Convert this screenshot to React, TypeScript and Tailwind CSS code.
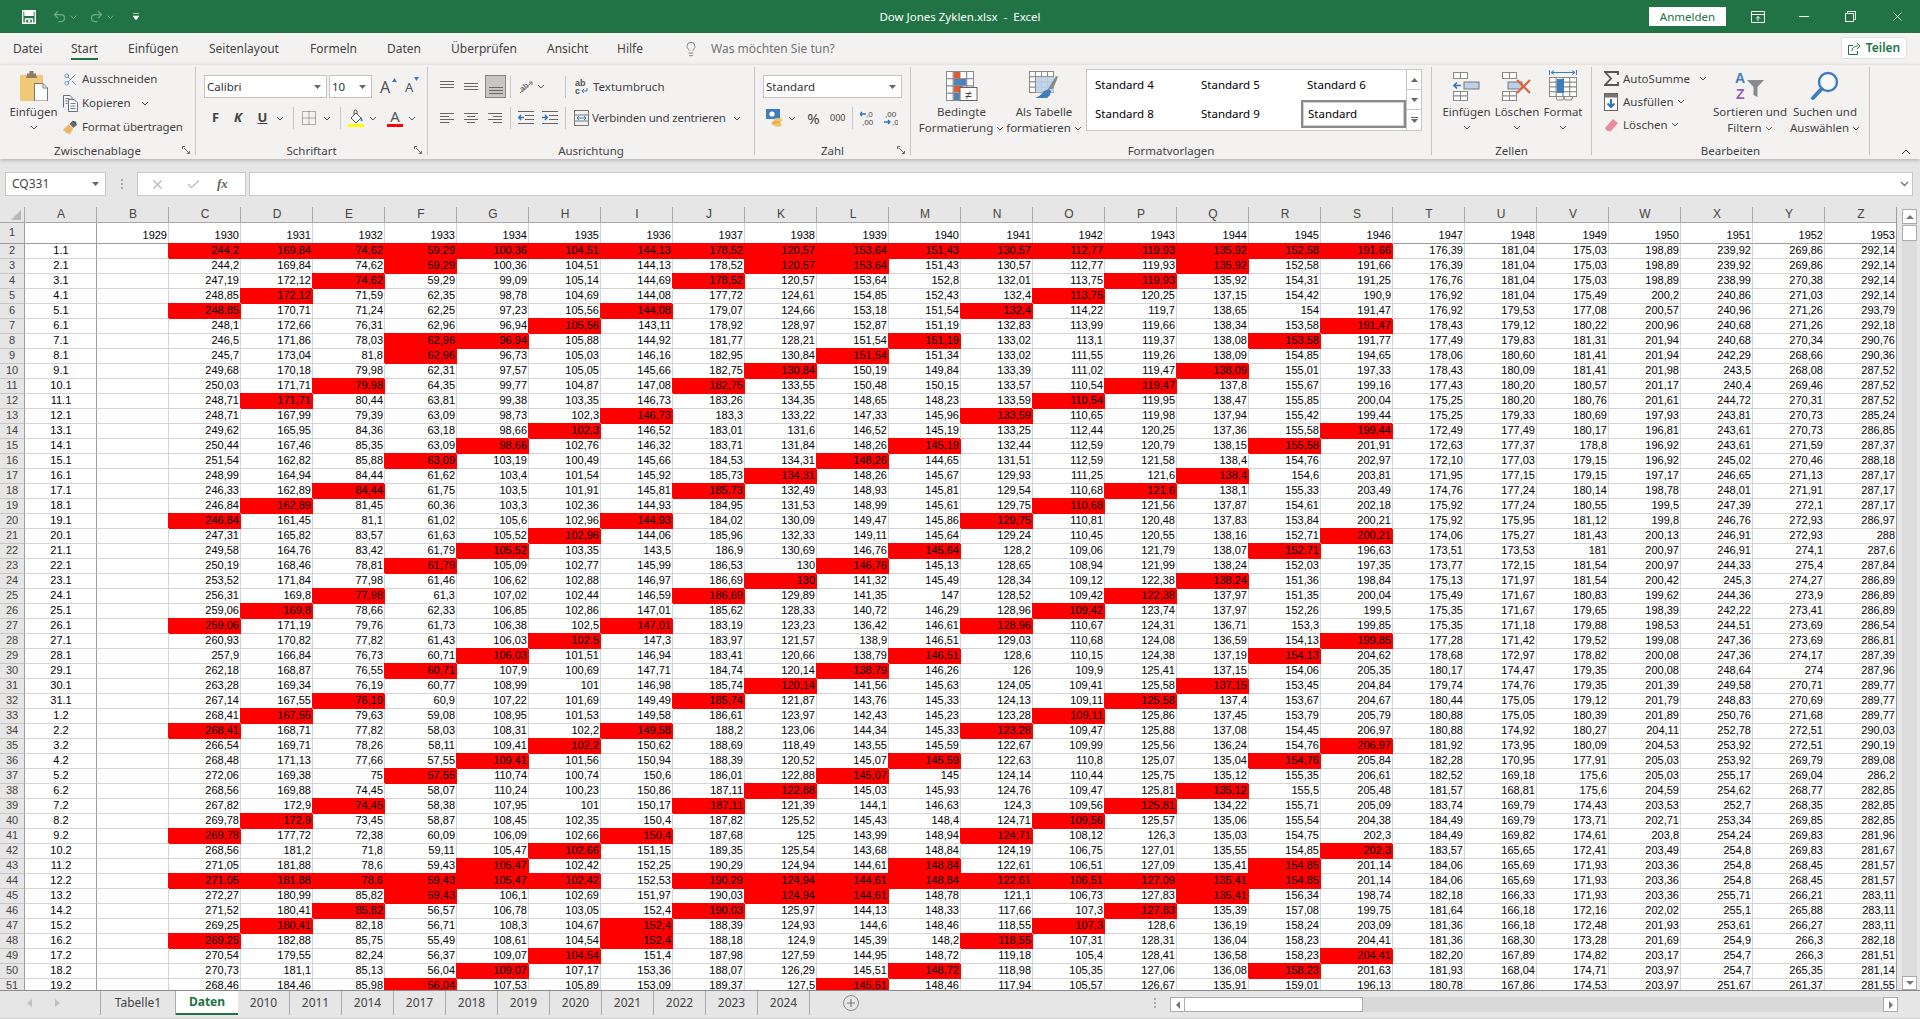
import type { ReactNode } from "react";
import { Check, Lightbulb, Plus, Redo2, Scissors, Undo2, X } from "lucide-react";

const COLUMNS = [
  "244,2* 244,2 247,19 248,85 248,85* 248,1 246,5 245,7 249,68 250,03 248,71 248,71 249,62 250,44 251,54 248,99 246,33 246,84 246,84* 247,31 249,58 250,19 253,52 256,31 259,06 259,06* 260,93 257,9 262,18 263,28 267,14 268,41 268,41* 266,54 268,48 272,06 268,56 267,82 269,78 269,78* 268,56 271,05 271,05* 272,27 271,52 269,25 269,25* 270,54 270,73 268,46",
  "169,84* 169,84 172,12 172,12* 170,71 172,66 171,86 173,04 170,18 171,71 171,71* 167,99 165,95 167,46 162,82 164,94 162,89 162,89* 161,45 165,82 164,76 168,46 171,84 169,8 169,8* 171,19 170,82 166,84 168,87 169,34 167,55 167,55* 168,71 169,71 171,13 169,38 169,88 172,9 172,9* 177,72 181,2 181,88 181,88* 180,99 180,41 180,41* 182,88 179,55 181,1 184,46",
  "74,62* 74,62 74,62* 71,59 71,24 76,31 78,03 81,8 79,98 79,98* 80,44 79,39 84,36 85,35 85,88 84,44 84,44* 81,45 81,1 83,57 83,42 78,81 77,98 77,98* 78,66 79,76 77,82 76,73 76,55 76,19 76,19* 79,63 77,82 78,26 77,66 75 74,45 74,45* 73,45 72,38 71,8 78,6 78,6* 85,82 85,82* 82,18 85,75 82,24 85,13 85,98",
  "59,29* 59,29* 59,29 62,35 62,25 62,96 62,96* 62,96* 62,31 64,35 63,81 63,09 63,18 63,09 63,09* 61,62 61,75 60,36 61,02 61,63 61,79 61,79* 61,46 61,3 62,33 61,73 61,43 60,71 60,71* 60,77 60,9 59,08 58,03 58,11 57,55 57,55* 58,07 58,38 58,87 60,09 59,11 59,43 59,43* 59,43* 56,57 56,71 55,49 56,37 56,04 56,04*",
  "100,36* 100,36 99,09 98,78 97,23 96,94 96,94* 96,73 97,57 99,77 99,38 98,73 98,66 98,66* 103,19 103,4 103,5 103,3 105,6 105,52 105,52* 105,09 106,62 107,02 106,85 106,38 106,03 106,03* 107,9 108,99 107,22 108,95 108,31 109,41 109,41* 110,74 110,24 107,95 108,45 106,09 105,47 105,47* 105,47* 106,1 106,78 108,3 108,61 109,07 109,07* 107,53",
  "104,51* 104,51 105,14 104,69 105,56 105,56* 105,88 105,03 105,05 104,87 103,35 102,3 102,3* 102,76 100,49 101,54 101,91 102,36 102,96 102,96* 103,35 102,77 102,88 102,44 102,86 102,5 102,5* 101,51 100,69 101 101,69 101,53 102,2 102,2* 101,56 100,74 100,23 101 102,35 102,66 102,66* 102,42 102,42* 102,69 103,05 104,67 104,54 104,54* 107,17 105,89",
  "144,13* 144,13 144,69 144,08 144,08* 143,11 144,92 146,16 145,66 147,08 146,73 146,73* 146,52 146,32 145,66 145,92 145,81 144,93 144,93* 144,06 143,5 145,99 146,97 146,59 147,01 147,01* 147,3 146,94 147,71 146,98 149,49 149,58 149,58* 150,62 150,94 150,6 150,86 150,17 150,4 150,4* 151,15 152,25 152,53 151,97 152,4 152,4* 152,4* 151,4 153,36 153,09",
  "178,52* 178,52 178,52* 177,72 179,07 178,92 181,77 182,95 182,75 182,75* 183,26 183,3 183,01 183,71 184,53 185,73 185,73* 184,95 184,02 185,96 186,9 186,53 186,69 186,69* 185,62 183,19 183,97 183,41 184,74 185,74 185,74* 186,61 188,2 188,69 188,39 186,01 187,11 187,11* 187,82 187,68 189,35 190,29 190,29* 190,03 190,03* 188,39 188,18 187,98 188,07 189,37",
  "120,57* 120,57* 120,57 124,61 124,66 128,97 128,21 130,84 130,84* 133,55 134,35 133,22 131,6 131,84 134,31 134,31* 132,49 131,53 130,09 132,33 130,69 130 130* 129,89 128,33 123,23 121,57 120,66 120,14 120,14* 121,87 123,97 123,06 118,49 120,52 122,88 122,88* 121,39 125,52 125 125,54 124,94 124,94* 124,94* 125,97 124,93 124,9 127,59 126,29 127,5",
  "153,64* 153,64* 153,64 154,85 153,18 152,87 151,54 151,54* 150,19 150,48 148,65 147,33 146,52 148,26 148,26* 148,26 148,93 148,99 149,47 149,11 146,76 146,76* 141,32 141,35 140,72 136,42 138,9 138,79 138,79* 141,56 143,76 142,43 144,34 143,55 145,07 145,07* 145,03 144,1 145,43 143,99 143,68 144,61 144,61* 144,61* 144,13 144,6 145,39 144,95 145,51 145,51*",
  "151,43* 151,43 152,8 152,43 151,54 151,19 151,19* 151,34 149,84 150,15 148,23 145,96 145,19 145,19* 144,65 145,67 145,81 145,61 145,86 145,64 145,64* 145,13 145,49 147 146,29 146,61 146,51 146,51* 146,26 145,63 145,33 145,23 145,33 145,59 145,59* 145 145,93 146,63 148,4 148,94 148,84 148,84* 148,84* 148,78 148,33 148,46 148,2 148,72 148,72* 148,46",
  "130,57* 130,57 132,01 132,4 132,4* 132,83 133,02 133,02 133,39 133,57 133,59 133,59* 133,25 132,44 131,51 129,93 129,54 129,75 129,75* 129,24 128,2 128,65 128,34 128,52 128,96 128,96* 129,03 128,6 126 124,05 124,13 123,28 123,28* 122,67 122,63 124,14 124,76 124,3 124,71 124,71* 124,19 122,61 122,61* 121,1 117,66 118,55 118,55* 119,18 118,98 117,94",
  "112,77* 112,77 113,75 113,75* 114,22 113,99 113,1 111,55 111,02 110,54 110,54* 110,65 112,44 112,59 112,59 111,25 110,68 110,68* 110,81 110,45 109,06 108,94 109,12 109,42 109,42* 110,67 110,68 110,15 109,9 109,41 109,11 109,11* 109,47 109,99 110,8 110,44 109,47 109,56 109,56* 108,12 106,75 106,51 106,51* 106,73 107,3 107,3* 107,31 105,4 105,35 105,57",
  "119,93* 119,93 119,93* 120,25 119,7 119,66 119,37 119,26 119,47 119,47* 119,95 119,98 120,25 120,79 121,58 121,6 121,6* 121,56 120,48 120,55 121,79 121,99 122,38 122,38* 123,74 124,31 124,08 124,38 125,41 125,58 125,58* 125,86 125,88 125,56 125,07 125,75 125,81 125,81* 125,57 126,3 127,01 127,09 127,09* 127,83 127,83* 128,6 128,31 128,41 127,06 126,67",
  "135,92* 135,92* 135,92 137,15 138,65 138,34 138,08 138,09 138,09* 137,8 138,47 137,94 137,36 138,15 138,4 138,4* 138,1 137,87 137,83 138,16 138,07 138,24 138,24* 137,97 137,97 136,71 136,59 137,19 137,15 137,15* 137,4 137,45 137,08 136,24 135,04 135,12 135,12* 134,22 135,06 135,03 135,55 135,41 135,41* 135,41* 135,39 136,19 136,04 136,58 136,08 135,91",
  "152,58* 152,58 154,31 154,42 154 153,58 153,58* 154,85 155,01 155,67 155,85 155,42 155,58 155,58* 154,76 154,6 155,33 154,61 153,84 152,71 152,71* 152,03 151,36 151,35 152,26 153,3 154,13 154,13* 154,06 153,45 153,67 153,79 154,45 154,76 154,76* 155,35 155,5 155,71 155,54 154,75 154,85 154,85* 154,85* 156,34 157,08 158,24 158,23 158,23 158,23* 159,01",
  "191,66* 191,66 191,25 190,9 191,47 191,47* 191,77 194,65 197,33 199,16 200,04 199,44 199,44* 201,91 202,97 203,81 203,49 202,18 200,21 200,21* 196,63 197,35 198,84 200,04 199,5 199,85 199,85* 204,62 205,35 204,84 204,67 205,79 206,97 206,97* 205,84 206,61 205,48 205,09 204,38 202,3 202,3* 201,14 201,14 198,74 199,75 203,09 204,41 204,41* 201,63 196,13",
  "176,39 176,39 176,76 176,92 176,92 178,43 177,49 178,06 178,43 177,43 175,25 175,25 172,49 172,63 172,10 171,95 174,76 175,92 175,92 174,06 173,51 173,77 175,13 175,49 175,35 175,35 177,28 178,68 180,17 179,74 180,44 180,88 180,88 181,92 182,28 182,52 181,57 183,74 184,49 184,49 183,57 184,06 184,06 182,18 181,64 181,36 181,36 182,20 181,93 180,78",
  "181,04 181,04 181,04 181,04 179,53 179,12 179,83 180,60 180,09 180,20 180,20 179,33 177,49 177,37 177,03 177,15 177,24 177,24 175,95 175,27 173,53 172,15 171,97 171,67 171,67 171,18 171,42 172,97 174,47 174,76 175,05 175,05 174,92 173,95 170,95 169,18 168,81 169,79 169,79 169,82 165,65 165,69 165,69 166,33 166,18 166,18 168,30 167,89 168,04 167,86",
  "175,03 175,03 175,03 175,49 177,08 180,22 181,31 181,41 181,41 180,57 180,76 180,69 180,17 178,8 179,15 179,15 180,14 180,55 181,12 181,43 181 181,54 181,54 180,83 179,65 179,88 179,52 178,82 179,35 179,35 179,12 180,39 180,27 180,09 177,91 175,6 175,6 174,43 173,71 174,61 172,41 171,93 171,93 171,93 172,16 172,48 173,28 174,82 174,71 174,53",
  "198,89 198,89 198,89 200,2 200,57 200,96 201,94 201,94 201,98 201,17 201,61 197,93 196,81 196,92 196,92 197,17 198,78 199,5 199,8 200,13 200,97 200,97 200,42 199,62 198,39 198,53 199,08 200,08 200,08 201,39 201,79 201,89 204,11 204,53 205,03 205,03 204,59 203,53 202,71 203,8 203,49 203,36 203,36 203,36 202,02 201,93 201,69 203,17 203,97 203,97",
  "239,92 239,92 238,99 240,86 240,96 240,68 240,68 242,29 243,5 240,4 244,72 243,81 243,61 243,61 245,02 246,65 248,01 247,39 246,76 246,91 246,91 244,33 245,3 244,36 242,22 244,51 247,36 247,36 248,64 249,58 248,83 250,76 252,78 253,92 253,92 255,17 254,62 252,7 253,34 254,24 254,8 254,8 254,8 255,71 255,1 253,61 254,9 254,7 254,7 251,67",
  "269,86 269,86 270,38 271,03 271,26 271,26 270,34 268,66 268,08 269,46 270,31 270,73 270,73 271,59 270,46 271,13 271,91 272,1 272,93 272,93 274,1 275,4 274,27 273,9 273,41 273,69 273,69 274,17 274 270,71 270,69 271,68 272,51 272,51 269,79 269,04 268,77 268,35 269,85 269,83 269,83 268,45 268,45 266,21 265,88 266,27 266,3 266,3 265,35 261,37",
  "292,14 292,14 292,14 292,14 293,79 292,18 290,76 290,36 287,52 287,52 287,52 285,24 286,85 287,37 288,18 287,17 287,17 287,17 286,97 288 287,6 287,84 286,89 286,89 286,89 286,54 286,81 287,39 287,96 289,77 289,77 289,77 290,03 290,19 289,08 286,2 282,85 282,85 282,85 281,96 281,67 281,57 281,57 283,11 283,11 283,11 282,18 281,51 281,14 281,55",
].map((c) => c.split(" "));

const LETTERS = "ABCDEFGHIJKLMNOPQRSTUVWXYZ".split("");
const SHEETS = ["2010", "2011", "2014", "2017", "2018", "2019", "2020", "2021", "2022", "2023", "2024"];
const MENU = [
  { label: "Datei", w: "w-[58px]" },
  { label: "Start", w: "w-[57px]" },
  { label: "Einfügen", w: "w-[81px]" },
  { label: "Seitenlayout", w: "w-[101px]" },
  { label: "Formeln", w: "w-[77px]" },
  { label: "Daten", w: "w-[64px]" },
  { label: "Überprüfen", w: "w-[96px]" },
  { label: "Ansicht", w: "w-[70px]" },
  { label: "Hilfe", w: "w-[66px]" },
];

function dayLabel(i: number) {
  return i < 31 ? `${i + 1}.1` : `${i - 30}.2`;
}

function Chev({ className = "" }: { className?: string }) {
  return (
    <svg width="8" height="5" viewBox="0 0 8 5" className={`shrink-0 ${className}`}>
      <path d="M1 1l3 3 3-3" fill="none" stroke="#555" strokeWidth="1" />
    </svg>
  );
}

function Caret() {
  return (
    <svg width="7" height="4" viewBox="0 0 7 4" className="shrink-0">
      <path d="M0 0h7L3.5 4z" fill="#666" />
    </svg>
  );
}

function Sep({ className = "" }: { className?: string }) {
  return <div className={`w-px h-[22px] shrink-0 bg-[#c8c6c4] ${className}`} />;
}

function Launcher() {
  return (
    <svg width="8" height="8" viewBox="0 0 8 8" className="absolute right-[5px] bottom-px">
      <path d="M.5 3V.5H3M7.5 5v2.5H5M2 2l5 5" fill="none" stroke="#666" strokeWidth="1" />
    </svg>
  );
}

function Group({ w, label, launcher, children }: { w: string; label: string; launcher?: boolean; children: ReactNode }) {
  return (
    <div className={`relative shrink-0 h-[88px] border-r border-[#c8c6c4] ${w}`}>
      <div className="flex flex-col h-[77px]">{children}</div>
      <div className="h-[14px] leading-[14px] text-center text-[11.5px] text-[#444] whitespace-nowrap">{label}</div>
      {launcher && <Launcher />}
    </div>
  );
}

function BigButton({ className, icon, lines, chevOnly }: { className: string; icon: ReactNode; lines: ReactNode[]; chevOnly?: boolean }) {
  return (
    <div className={`flex flex-col items-center pt-[4px] shrink-0 text-[11.5px] text-[#444] ${className}`}>
      <div className="h-[29px] flex items-center justify-center">{icon}</div>
      <div className="mt-[4px]">
        {lines.map((l, i) => (
          <div key={i} className="h-[16px] leading-[16px] whitespace-nowrap flex items-center justify-center gap-[3px]">
            {l}
          </div>
        ))}
        {chevOnly && (
          <div className="h-[14px] flex items-center justify-center">
            <Chev />
          </div>
        )}
      </div>
    </div>
  );
}

function Lines({ rows }: { rows: [number, number, number][] }) {
  return (
    <svg width="14" height="14" viewBox="0 0 14 14" className="shrink-0">
      {rows.map(([a, b, y], i) => (
        <path key={i} d={`M${a} ${y + 0.5}H${b}`} stroke="#666" strokeWidth="1" />
      ))}
    </svg>
  );
}

const COMBO = "flex items-center justify-between h-[23px] bg-white border border-[#c4c4c4] px-[2px] pr-[5px] text-[11.5px] text-[#333] shrink-0";

function PasteIcon() {
  return (
    <svg width="28" height="30" viewBox="0 0 28 30">
      <rect x="0" y="4" width="23" height="26" rx="1" fill="#f0c878" />
      <path d="M7 4V2.5h2.5V0h4v2.5H16V4l1 3H6z" fill="#8e7c6a" />
      <path d="M14.5 12.5H23l4.5 4.5v13h-13z" fill="#fff" stroke="#777" />
      <path d="M23 12.5V17h4.5" fill="none" stroke="#777" />
    </svg>
  );
}

function CopyIcon() {
  return (
    <svg width="15" height="17" viewBox="0 0 15 17" fill="none" stroke="#5a6f8c">
      <path d="M.5 12.5V.5H7l2 2V4" />
      <path d="M5.5 4.5H11l3.5 3v9h-9z" fill="#fff" />
      <path d="M2.5 3.5h4M2.5 6h2M2.5 8.5h2M7.5 8.5h5M7.5 11h5M7.5 13.5h5" stroke="#777" />
    </svg>
  );
}

function PainterIcon() {
  return (
    <svg width="16" height="17" viewBox="0 0 16 17">
      <path d="M1 10l5-5 5 5-4 6-2-1-1-1-2 1 1-2-3-1z" fill="#eeb46a" />
      <path d="M7 4.5l3-3 4 .5.5 4-3.5 3z" fill="#6b6b6b" />
      <path d="M10.5 1.5l4 4" stroke="#444" />
    </svg>
  );
}

function SaveIcon() {
  return (
    <svg width="14" height="14" viewBox="0 0 14 14" fill="none" stroke="#fff" strokeWidth="1.4">
      <path d="M.7.7h12.6v12.6H.7z" />
      <path d="M3 .7v4.6h8V.7" fill="#fff" />
      <path d="M3.5 13.3V9h7v4.3" />
      <rect x="6.2" y="10" width="2" height="2.4" fill="#fff" stroke="none" />
    </svg>
  );
}

function TableIcon({ w = 15, h = 15, cols = 3, rows = 3 }: { w?: number; h?: number; cols?: number; rows?: number }) {
  const cells: ReactNode[] = [];
  for (let r = 0; r < rows; r++)
    for (let c = 0; c < cols; c++)
      cells.push(<rect key={`${r}-${c}`} x={0.5 + (c * (w - 1)) / cols} y={0.5 + (r * (h - 1)) / rows} width={(w - 1) / cols} height={(h - 1) / rows} fill="#fff" stroke="#8a8a8a" />);
  return <g>{cells}</g>;
}

function CondFormatIcon() {
  return (
    <svg width="32" height="30" viewBox="0 0 32 30">
      <TableIcon w={28} h={30} cols={4} rows={4} />
      <rect x="8" y="1" width="6" height="6.5" fill="#d95f33" />
      <rect x="8" y="8" width="12" height="6.5" fill="#4f81bd" />
      <rect x="8" y="15" width="9" height="6.5" fill="#d95f33" />
      <rect x="8" y="22" width="5" height="7" fill="#4f81bd" />
      <rect x="14" y="16.5" width="17" height="13" fill="#fff" stroke="#666" />
      <text x="22.5" y="27.5" fontSize="12" textAnchor="middle" fill="#444" fontFamily="Liberation Sans, sans-serif">≠</text>
    </svg>
  );
}

function TableFormatIcon() {
  return (
    <svg width="30" height="30" viewBox="0 0 30 30">
      <TableIcon w={25} h={22} cols={4} rows={4} />
      <rect x="7" y="6" width="18" height="15.5" fill="#bdd0e6" opacity="0.9" />
      <path d="M19 18l8-13 2 1-5 12z" fill="#8a8a8a" />
      <path d="M15 20l5-2 2 2-1 4-3 3H6c3-1 6-3 9-7z" fill="#3f7dbf" />
    </svg>
  );
}

function InsertCellsIcon() {
  return (
    <svg width="27" height="30" viewBox="0 0 27 30">
      <g transform="translate(0 1)"><TableIcon w={15} h={7} cols={2} rows={1} /></g>
      <rect x="11" y="11" width="15" height="7" fill="#bdd0e6" stroke="#777" />
      <path d="M1 14.5h7M4 11.5l-3 3 3 3" fill="none" stroke="#2f75b5" strokeWidth="1.6" />
      <g transform="translate(0 20)"><TableIcon w={15} h={10} cols={2} rows={2} /></g>
    </svg>
  );
}

function DeleteCellsIcon() {
  return (
    <svg width="30" height="30" viewBox="0 0 30 30">
      <g transform="translate(0 1)"><TableIcon w={15} h={7} cols={2} rows={1} /></g>
      <rect x="6" y="11" width="14" height="7" fill="#bdd0e6" stroke="#777" />
      <g transform="translate(0 20)"><TableIcon w={15} h={10} cols={2} rows={2} /></g>
      <path d="M15 9l13 13M28 9L15 22" stroke="#e0603a" strokeWidth="2.2" />
    </svg>
  );
}

function FormatCellsIcon() {
  return (
    <svg width="28" height="32" viewBox="0 0 28 32">
      <path d="M.5 0v5M27.5 0v5M2 2.5h24M5 .5l-3 2 3 2M23 .5l3 2-3 2" fill="none" stroke="#3f7dbf" />
      <g transform="translate(0 7)"><TableIcon w={28} h={20} cols={4} rows={4} /></g>
      <rect x="8" y="9" width="7" height="14" fill="#3f7dbf" />
      <path d="M7 27l1 3h6l1-3M15 27l1 3h6l2-3" fill="none" stroke="#8a8a8a" />
    </svg>
  );
}

function SortIcon() {
  return (
    <svg width="30" height="30" viewBox="0 0 30 30">
      <text x="0" y="12" fontSize="14" fontWeight="700" fill="#3f7dbf" fontFamily="Liberation Sans, sans-serif">A</text>
      <text x="1" y="28" fontSize="14" fontWeight="700" fill="#8f5fbf" fontFamily="Liberation Sans, sans-serif">Z</text>
      <path d="M12 9h17l-6.5 7v10l-4-2v-8z" fill="#8a8a8a" />
    </svg>
  );
}

function SearchIcon() {
  return (
    <svg width="28" height="30" viewBox="0 0 28 30" fill="none">
      <circle cx="17" cy="11" r="9" stroke="#3f7dbf" strokeWidth="2.4" fill="#fff" fillOpacity="0.5" />
      <path d="M10.5 18L2 27" stroke="#3f7dbf" strokeWidth="4" strokeLinecap="round" />
    </svg>
  );
}

function Ribbon() {
  return (
    <div className="relative z-10 flex items-start h-[94px] pt-[2px] bg-[#f3f2f1] shadow-[0_1px_4px_rgba(0,0,0,0.25)]">
      <Group w="w-[196px]" label="Zwischenablage" launcher>
        <div className="flex">
          <BigButton className="ml-[10px] w-[47px]" icon={<PasteIcon />} lines={["Einfügen"]} chevOnly />
          <div className="ml-[6px] text-[11.5px] text-[#444]">
            <div className="flex items-center h-[24px]">
              <div className="w-[15px] flex justify-center"><Scissors size={15} color="#4a7ebb" strokeWidth={1.2} /></div>
              <span className="ml-[4px]">Ausschneiden</span>
            </div>
            <div className="flex items-center h-[24px]">
              <div className="w-[15px] flex justify-center"><CopyIcon /></div>
              <span className="ml-[4px] w-[57px]">Kopieren</span>
              <Chev className="ml-[2px]" />
            </div>
            <div className="flex items-center h-[24px]">
              <div className="w-[15px] flex justify-center"><PainterIcon /></div>
              <span className="ml-[4px] whitespace-nowrap tracking-[-0.15px]">Format übertragen</span>
            </div>
          </div>
        </div>
      </Group>

      <Group w="w-[232px]" label="Schriftart" launcher>
        <div className="flex items-center mt-[8px] ml-[8px] h-[23px]">
          <div className={`${COMBO} w-[123px]`}>Calibri<Caret /></div>
          <div className={`${COMBO} w-[43px] ml-[2px]`}>10<Caret /></div>
          <div className="ml-[8px] w-[14px] flex items-start justify-start relative text-[16px] leading-[20px] text-[#555]">
            A
            <svg width="5" height="4" viewBox="0 0 5 4" className="absolute right-[-3px] top-[1px]"><path d="M0 4h5L2.5 0z" fill="#3f7dbf" /></svg>
          </div>
          <div className="ml-[11px] w-[12px] relative text-[13px] leading-[18px] text-[#555]">
            A
            <svg width="5" height="4" viewBox="0 0 5 4" className="absolute right-[-2px] top-[-1px]"><path d="M0 0h5L2.5 4z" fill="#3f7dbf" /></svg>
          </div>
        </div>
        <div className="flex items-center mt-[9px] h-[22px] text-[13px] text-[#444]">
          <div className="ml-[8px] w-[23px] text-center font-bold">F</div>
          <div className="w-[22px] text-center font-bold italic">K</div>
          <div className="ml-[2px] w-[23px] text-center font-bold underline">U</div>
          <Chev className="ml-[2px]" />
          <Sep className="ml-[9px]" />
          <svg width="14" height="14" viewBox="0 0 14 14" className="ml-[8px] shrink-0" fill="none" stroke="#666" strokeDasharray="1 1">
            <path d="M.5.5h13v13H.5zM7 .5v13M.5 7h13" />
          </svg>
          <Chev className="ml-[7px]" />
          <Sep className="ml-[9px]" />
          <svg width="16" height="18" viewBox="0 0 16 18" className="ml-[7px] shrink-0">
            <path d="M3 9l5-5 5 5-5 5z" fill="#fff" stroke="#555" />
            <path d="M6 6V2.5a1.5 1.5 0 0 1 3 0V5" fill="none" stroke="#555" />
            <path d="M13 8c1.5 2 1.8 3 1.5 4-.8.7-1.8.3-2-.7z" fill="#3f7dbf" />
            <rect x="0" y="15" width="16" height="3" fill="#ffff00" />
          </svg>
          <Chev className="ml-[5px]" />
          <div className="ml-[10px] w-[16px] h-[18px] flex flex-col items-center">
            <span className="h-[15px] leading-[15px] text-[15px] text-[#555]">A</span>
            <div className="w-[16px] h-[3px] bg-[#ff0000]" />
          </div>
          <Chev className="ml-[5px]" />
        </div>
      </Group>

      <Group w="w-[327px]" label="Ausrichtung" launcher={false}>
        <div className="flex items-center mt-[8px] h-[23px] text-[11.5px] text-[#444] whitespace-nowrap">
          <div className="ml-[12px]"><Lines rows={[[0, 14, 1], [0, 14, 4], [0, 14, 7]]} /></div>
          <div className="ml-[10px]"><Lines rows={[[0, 14, 3], [0, 14, 6], [0, 14, 9]]} /></div>
          <div className="ml-[7px] w-[21px] h-[23px] bg-[#c8c6c4] border border-[#8a8886] flex items-center justify-center"><Lines rows={[[0, 14, 7], [0, 14, 10], [0, 14, 13]]} /></div>
          <Sep className="ml-[4px]" />
          <svg width="15" height="15" viewBox="0 0 15 15" className="ml-[7px] shrink-0">
            <text x="1" y="10" fontSize="8" fill="#555" transform="rotate(-40 7 7)" fontFamily="Liberation Sans, sans-serif">ab</text>
            <path d="M2 14L14 3M11 3h3v3" fill="none" stroke="#777" />
          </svg>
          <Chev className="ml-[4px]" />
          <Sep className="ml-[20px]" />
          <svg width="13" height="17" viewBox="0 0 13 17" className="ml-[9px] shrink-0">
            <text x="0" y="8" fontSize="9" fontWeight="700" fill="#555" fontFamily="Liberation Sans, sans-serif">ab</text>
            <text x="0" y="16" fontSize="9" fontWeight="700" fill="#555" fontFamily="Liberation Sans, sans-serif">c</text>
            <path d="M12 10v3H7M9 11l-2 2 2 2" fill="none" stroke="#3f7dbf" />
          </svg>
          <span className="ml-[5px]">Textumbruch</span>
        </div>
        <div className="flex items-center mt-[9px] h-[22px] text-[11.5px] text-[#444] whitespace-nowrap">
          <div className="ml-[12px]"><Lines rows={[[0, 14, 2], [0, 9, 5], [0, 14, 8], [0, 9, 11]]} /></div>
          <div className="ml-[10px]"><Lines rows={[[0, 14, 2], [3, 11, 5], [0, 14, 8], [3, 11, 11]]} /></div>
          <div className="ml-[10px]"><Lines rows={[[0, 14, 2], [5, 14, 5], [0, 14, 8], [5, 14, 11]]} /></div>
          <Sep className="ml-[8px]" />
          <svg width="16" height="14" viewBox="0 0 16 14" className="ml-[7px] shrink-0">
            <path d="M0 .5h16M7 4.5h9M7 8.5h9M0 12.5h16" stroke="#666" />
            <path d="M6 6.5H1M3 4L.8 6.5 3 9" fill="none" stroke="#2f75b5" strokeWidth="1.5" />
          </svg>
          <svg width="16" height="14" viewBox="0 0 16 14" className="ml-[8px] shrink-0">
            <path d="M0 .5h16M7 4.5h9M7 8.5h9M0 12.5h16" stroke="#666" />
            <path d="M0 6.5h5M3 4l2.2 2.5L3 9" fill="none" stroke="#2f75b5" strokeWidth="1.5" />
          </svg>
          <Sep className="ml-[7px]" />
          <svg width="15" height="16" viewBox="0 0 15 16" className="ml-[8px] shrink-0" fill="none">
            <path d="M.5.5h14v15H.5zM.5 5h14M.5 11h14" stroke="#777" />
            <path d="M3 8h9M5 6L3 8l2 2M10 6l2 2-2 2" stroke="#3f7dbf" />
          </svg>
          <span className="ml-[3px] w-[141px] tracking-[-0.2px]">Verbinden und zentrieren</span>
          <Chev />
        </div>
      </Group>

      <Group w="w-[156px]" label="Zahl" launcher>
        <div className={`${COMBO} mt-[8px] ml-[8px] w-[139px]`}>Standard<Caret /></div>
        <div className="flex items-center mt-[9px] h-[22px] text-[#444]">
          <svg width="17" height="18" viewBox="0 0 17 18" className="ml-[11px] shrink-0">
            <rect x="0" y="0" width="14" height="10" fill="#3f7dbf" />
            <circle cx="6" cy="5" r="2.6" fill="#fff" />
            <ellipse cx="12" cy="11" rx="4.5" ry="2" fill="#f2c46d" />
            <ellipse cx="10" cy="14" rx="4.5" ry="2" fill="#e8a94f" />
            <ellipse cx="12" cy="16" rx="4" ry="1.8" fill="#f2c46d" />
          </svg>
          <Chev className="ml-[5px]" />
          <span className="ml-[11px] w-[13px] text-[15px] leading-[18px] text-center">%</span>
          <span className="ml-[10px] w-[14px] text-[9px] text-center">000</span>
          <Sep className="ml-[8px]" />
          <svg width="15" height="18" viewBox="0 0 15 18" className="ml-[7px] shrink-0">
            <text x="6" y="8" fontSize="8" fill="#444" fontFamily="Liberation Sans, sans-serif">,0</text>
            <text x="2" y="16" fontSize="8" fill="#444" fontFamily="Liberation Sans, sans-serif">,00</text>
            <path d="M6 5H0M2 3L0 5l2 2" fill="none" stroke="#2f75b5" strokeWidth="1.3" />
          </svg>
          <svg width="14" height="18" viewBox="0 0 14 18" className="ml-[9px] shrink-0">
            <text x="1" y="8" fontSize="8" fill="#444" fontFamily="Liberation Sans, sans-serif">,00</text>
            <text x="8" y="16" fontSize="8" fill="#444" fontFamily="Liberation Sans, sans-serif">,0</text>
            <path d="M0 13h6M4 11l2 2-2 2" fill="none" stroke="#2f75b5" strokeWidth="1.3" />
          </svg>
        </div>
      </Group>

      <Group w="w-[521px]" label="Formatvorlagen">
        <div className="flex items-start">
          <BigButton className="ml-[10px] w-[81px]" icon={<CondFormatIcon />} lines={["Bedingte", <>Formatierung<Chev /></>]} />
          <BigButton className="ml-[6px] w-[72px]" icon={<TableFormatIcon />} lines={["Als Tabelle", <>formatieren<Chev /></>]} />
          <div className="flex mt-[2px] ml-[6px] w-[336px] h-[62px] bg-white border border-[#c8c6c4] text-[11.5px] text-black">
            <div className="grid grid-cols-[106px_106px_106px] grid-rows-[30px_28px] w-[319px] ml-px">
              {["Standard 4", "Standard 5", "Standard 6", "Standard 8", "Standard 9"].map((s) => (
                <div key={s} className="flex items-center pl-[7px] whitespace-nowrap">{s}</div>
              ))}
              <div className="flex items-center pl-[5px] ml-px border-2 border-[#8a8a8a] outline outline-1 -outline-offset-3 outline-[#d0d0d0] h-[28px]">Standard</div>
            </div>
            <div className="flex flex-col w-[15px] border-l border-[#c8c6c4]">
              <div className="h-[20px] flex items-center justify-center border-b border-[#c8c6c4]">
                <svg width="7" height="4" viewBox="0 0 7 4"><path d="M0 4h7L3.5 0z" fill="#666" /></svg>
              </div>
              <div className="h-[20px] flex items-center justify-center border-b border-[#c8c6c4]"><Caret /></div>
              <div className="flex-1 flex flex-col items-center justify-center gap-[1px]">
                <div className="w-[7px] h-px bg-[#666]" />
                <Caret />
              </div>
            </div>
          </div>
        </div>
      </Group>

      <Group w="w-[160px]" label="Zellen">
        <div className="flex items-start">
          <BigButton className="ml-[11px] w-[47px]" icon={<InsertCellsIcon />} lines={["Einfügen"]} chevOnly />
          <BigButton className="ml-px w-[52px]" icon={<DeleteCellsIcon />} lines={["Löschen"]} chevOnly />
          <BigButton className="w-[40px]" icon={<FormatCellsIcon />} lines={["Format"]} chevOnly />
        </div>
      </Group>

      <Group w="w-[278px]" label="Bearbeiten">
        <div className="flex items-start">
          <div className="ml-[12px] w-[108px] text-[11.5px] text-[#444] whitespace-nowrap">
            <div className="flex items-center h-[23px]">
              <svg width="15" height="15" viewBox="0 0 15 15" className="shrink-0"><path d="M14 4V1H1l6 6.5L1 14h13v-3" fill="none" stroke="#555" strokeWidth="1.8" /></svg>
              <span className="ml-[4px] w-[76px]">AutoSumme</span>
              <Chev />
            </div>
            <div className="flex items-center h-[23px]">
              <svg width="15" height="18" viewBox="0 0 15 18" className="shrink-0" fill="none">
                <rect x=".5" y=".5" width="13" height="17" fill="#fff" stroke="#666" />
                <rect x="1" y="1" width="12" height="3.5" fill="#777" />
                <path d="M7 6v8M3.5 10.5L7 14l3.5-3.5" stroke="#2f75b5" strokeWidth="2" />
              </svg>
              <span className="ml-[4px]">Ausfüllen</span>
              <Chev className="ml-[3px]" />
            </div>
            <div className="flex items-center h-[23px]">
              <svg width="15" height="14" viewBox="0 0 15 14" className="shrink-0">
                <path d="M9 1l5 4-7 8H3L1 10z" fill="#ea8a9b" />
              </svg>
              <span className="ml-[4px]">Löschen</span>
              <Chev className="ml-[3px]" />
            </div>
          </div>
          <BigButton className="ml-[2px] w-[72px]" icon={<SortIcon />} lines={["Sortieren und", <>Filtern<Chev /></>]} />
          <BigButton className="w-[78px]" icon={<SearchIcon />} lines={["Suchen und", <>Auswählen<Chev /></>]} />
        </div>
      </Group>

      <svg width="10" height="6" viewBox="0 0 10 6" className="ml-[31px] mt-[82px] shrink-0">
        <path d="M1 5l4-4 4 4" fill="none" stroke="#444" />
      </svg>
    </div>
  );
}

function Sheet() {
  const head = "flex items-center justify-center h-[16px] pl-px bg-[#e6e6e6] border-r border-b border-[#a8a8a8] text-[12px] leading-[15px] text-[#444]";
  const rowHead = "flex items-center justify-center bg-[#e6e6e6] border-r border-b border-r-[#9c9c9c] border-b-[#c6c6c6] text-[11px] text-[#444] pb-px";
  return (
    <div className="h-[783px] w-[1897px] overflow-hidden border-r border-[#9c9c9c] [font-family:'Liberation_Sans',sans-serif]">
      <div className="grid grid-cols-[25px_repeat(26,72px)] bg-white text-[11px] text-black">
        <div className="flex items-end justify-end h-[16px] bg-[#e6e6e6] border-r border-b border-[#a8a8a8] pr-[3px] pb-[2px]">
          <svg width="10" height="10" viewBox="0 0 10 10"><path d="M10 0v10H0z" fill="#b8b8b8" /></svg>
        </div>
        {LETTERS.map((l) => (
          <div key={l} className={head}>{l}</div>
        ))}

        <div className={`${rowHead} h-[21px] !border-b-[#9c9c9c]`}>1</div>
        <div className="h-[21px] border-r border-b border-r-[#9c9c9c] border-b-[#9c9c9c]" />
        {Array.from({ length: 25 }, (_, i) => (
          <div key={i} className="flex items-end justify-end h-[21px] pr-px leading-[15px] border-r border-b border-r-[#d4d4d4] border-b-[#9c9c9c]">
            {1929 + i}
          </div>
        ))}

        {Array.from({ length: 50 }, (_, r) => (
          <div key={r} className="contents">
            <div className={`${rowHead} h-[15px]`}>{r + 2}</div>
            <div className="flex items-center justify-center h-[15px] pb-px pl-px leading-[13px] border-r border-b border-r-[#9c9c9c] border-b-[#d4d4d4]">{dayLabel(r)}</div>
            <div className="h-[15px] border-r border-b border-[#d4d4d4]" />
            {COLUMNS.map((col, c) => {
              const raw = col[r];
              const red = raw.endsWith("*");
              return (
                <div
                  key={c}
                  className={
                    red
                      ? "flex items-center justify-end h-[15px] pb-px leading-[13px] pr-px border-r border-b border-[#ff0000] bg-[#ff0000] shadow-[-1px_-1px_0_#ff0000]"
                      : "flex items-center justify-end h-[15px] pb-px leading-[13px] pr-px border-r border-b border-[#d4d4d4]"
                  }
                >
                  {red ? raw.slice(0, -1) : raw}
                </div>
              );
            })}
          </div>
        ))}
      </div>
    </div>
  );
}

function VScroll() {
  const btn = "flex items-center justify-center w-[15px] bg-white border border-[#ababab]";
  return (
    <div className="w-[23px] h-[783px] pl-[5px] pr-[3px] flex flex-col">
      <div className="h-[2px]" />
      <div className="flex-1 flex flex-col bg-[#dcdcdc]">
        <div className={`${btn} h-[15px]`}>
          <svg width="8" height="4" viewBox="0 0 8 4"><path d="M0 4h8L4 0z" fill="#777" /></svg>
        </div>
        <div className="w-[15px] h-[16px] mt-px bg-white border border-[#ababab]" />
        <div className="flex-1" />
        <div className={`${btn} h-[14px]`}>
          <svg width="8" height="4" viewBox="0 0 8 4"><path d="M0 0h8L4 4z" fill="#777" /></svg>
        </div>
      </div>
    </div>
  );
}

function TabStrip() {
  return (
    <div className="flex h-[28px] items-start border-t border-[#8a8a8a] bg-[#e6e6e6] text-[12px] text-[#444]">
      <div className="flex items-center h-[24px] w-[100px] shrink-0">
        <svg width="5" height="8" viewBox="0 0 5 8" className="ml-[27px]"><path d="M5 0v8L0 4z" fill="#c0c0c0" /></svg>
        <svg width="5" height="8" viewBox="0 0 5 8" className="ml-[23px]"><path d="M0 0v8l5-4z" fill="#c0c0c0" /></svg>
      </div>
      <div className="flex items-center h-[24px] w-[76px] border-x border-[#a8a8a8] justify-center shrink-0 my-0">Tabelle1</div>
      <div className="flex items-center justify-center h-[24px] w-[62px] bg-white font-bold text-[#217346] border-b-[2px] border-[#217346] shrink-0">Daten</div>
      {SHEETS.map((s) => (
        <div key={s} className="flex items-center justify-center h-[24px] w-[52px] border-r border-[#a8a8a8] shrink-0">{s}</div>
      ))}
      <div className="flex items-center h-[24px] ml-[33px] shrink-0">
        <div className="flex items-center justify-center w-[16px] h-[16px] rounded-full border border-[#8a8a8a]">
          <Plus size={12} color="#777" strokeWidth={2.4} />
        </div>
      </div>
      <div className="flex items-center h-[24px] ml-[295px] w-[16px] shrink-0">
        <div className="flex flex-col gap-[2px]">
          <div className="w-[2px] h-[2px] bg-[#a8a8a8]" />
          <div className="w-[2px] h-[2px] bg-[#a8a8a8]" />
          <div className="w-[2px] h-[2px] bg-[#a8a8a8]" />
        </div>
      </div>
      <div className="flex mt-[6px] h-[15px] w-[728px] bg-[#d9d9d9] shrink-0">
        <div className="flex items-center justify-center w-[15px] bg-white border border-[#ababab]">
          <svg width="4" height="8" viewBox="0 0 4 8"><path d="M4 0v8L0 4z" fill="#777" /></svg>
        </div>
        <div className="w-[178px] bg-white border border-[#ababab] border-l-0" />
        <div className="flex-1" />
        <div className="flex items-center justify-center w-[15px] bg-white border border-[#ababab]">
          <svg width="4" height="8" viewBox="0 0 4 8"><path d="M0 0v8l4-4z" fill="#777" /></svg>
        </div>
      </div>
    </div>
  );
}

export default function App() {
  return (
    <div className="w-[1920px] h-[1019px] overflow-hidden bg-[#e6e6e6] [font-family:'Noto_Sans',sans-serif]">
      {/* title bar */}
      <div className="grid grid-cols-[1fr_auto_1fr] items-center h-[33px] bg-[#217346] text-white text-[11.5px]">
        <div className="flex items-center pl-[22px]">
          <SaveIcon />
          <Undo2 size={15} color="#6fa98a" className="ml-[16px]" />
          <svg width="7" height="4" viewBox="0 0 7 4" className="ml-[3px]"><path d="M.5.5l3 3 3-3" fill="none" stroke="#6fa98a" /></svg>
          <Redo2 size={15} color="#6fa98a" className="ml-[12px]" />
          <svg width="7" height="4" viewBox="0 0 7 4" className="ml-[3px]"><path d="M.5.5l3 3 3-3" fill="none" stroke="#6fa98a" /></svg>
          <svg width="6" height="8" viewBox="0 0 6 8" className="ml-[19px]"><path d="M0 .5h6M0 3h6L3 7z" fill="#fff" stroke="#fff" strokeWidth="0.6" /></svg>
        </div>
        <div className="whitespace-pre">Dow Jones Zyklen.xlsx  -  Excel</div>
        <div className="flex items-center justify-end pr-[15px]">
          <div className="flex items-center justify-center w-[77px] h-[19px] bg-white text-[#217346]">Anmelden</div>
          <svg width="14" height="12" viewBox="0 0 14 12" className="ml-[25px]" fill="none" stroke="#fff">
            <path d="M.5.5h13v11H.5zM.5 3.5h13M7 10V5.5M5 7.5l2-2 2 2" />
          </svg>
          <div className="ml-[34px] w-[10px] h-px bg-white" />
          <svg width="11" height="11" viewBox="0 0 11 11" className="ml-[36px]" fill="none" stroke="#fff">
            <path d="M.5 2.5h8v8h-8zM2.5 2.5v-2h8v8h-2" />
          </svg>
          <X size={15} color="#fff" strokeWidth={1.2} className="ml-[34px]" />
        </div>
      </div>

      {/* menu row */}
      <div className="flex h-[32px] pl-[13px] bg-[#f3f2f1] text-[12px] text-[#444]">
        {MENU.map((m) => (
          <div key={m.label} className={`shrink-0 ${m.w}`}>
            <span className={m.label === "Start" ? "inline-block h-[27px] pt-[7px] leading-[17px] border-b-2 border-[#217346]" : "inline-block h-[27px] pt-[7px] leading-[17px]"}>{m.label}</span>
          </div>
        ))}
        <div className="flex items-start pt-[8px] text-[#737373]">
          <Lightbulb size={16} color="#666" strokeWidth={1.2} />
          <span className="ml-[12px] leading-[17px] -mt-px">Was möchten Sie tun?</span>
        </div>
        <div className="flex-1" />
        <div className="flex items-center justify-center gap-[5px] mt-[4px] mr-[13px] w-[66px] h-[22px] bg-white border border-[#e1dfdd] rounded-[2px] font-semibold text-[#217346]">
          <svg width="13" height="13" viewBox="0 0 13 13" fill="none" stroke="#217346">
            <path d="M5 3.5H.5v9h9V9M4 9c0-3 2.5-5 6-5M9 1l3 3-3 3" />
          </svg>
          Teilen
        </div>
      </div>

      <Ribbon />

      {/* formula bar */}
      <div className="flex items-start h-[48px] pt-[13px] text-[12px] text-[#444]">
        <div className="flex items-center justify-between ml-[5px] w-[101px] h-[24px] pl-[6px] pr-[6px] bg-white border border-[#c8c6c4]">
          CQ331
          <Caret />
        </div>
        <div className="flex flex-col items-center justify-center gap-[2px] w-[31px] h-[24px]">
          <div className="w-[2px] h-[2px] bg-[#a8a8a8]" />
          <div className="w-[2px] h-[2px] bg-[#a8a8a8]" />
          <div className="w-[2px] h-[2px] bg-[#a8a8a8]" />
        </div>
        <div className="flex items-center w-[109px] h-[24px] bg-white border border-[#c8c6c4]">
          <X size={15} color="#b8b8b8" className="ml-[12px]" />
          <Check size={15} color="#b8b8b8" className="ml-[21px]" />
          <span className="ml-[16px] italic font-bold text-[13px] text-[#666] [font-family:'Liberation_Serif',serif]">fx</span>
        </div>
        <div className="flex items-center justify-end ml-[3px] w-[1664px] h-[24px] pr-[3px] bg-white border border-[#c8c6c4]">
          <svg width="9" height="6" viewBox="0 0 9 6"><path d="M1 1l3.5 3.5L8 1" fill="none" stroke="#777" strokeWidth="1.4" /></svg>
        </div>
      </div>

      {/* sheet */}
      <div className="flex">
        <Sheet />
        <VScroll />
      </div>

      <TabStrip />

      {/* status bar sliver */}
      <div className="h-[2px] bg-[#f3f2f1] border-t border-[#d0d0d0] flex">
        <div className="ml-[1622px] w-[41px] bg-[#c8c6c4]" />
      </div>
    </div>
  );
}
